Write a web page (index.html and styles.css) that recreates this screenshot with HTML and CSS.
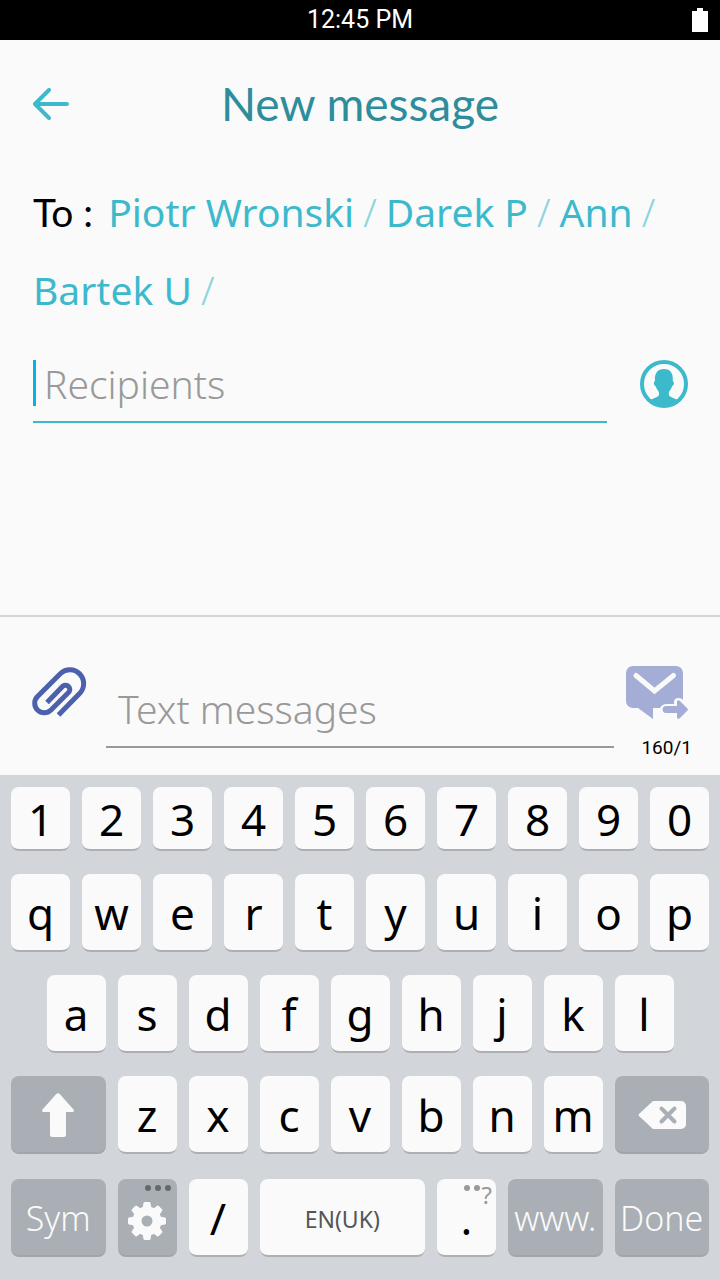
FILE: index.html
```html
<!DOCTYPE html>
<html lang="en">
<head>
<meta charset="utf-8">
<meta name="viewport" content="width=device-width, initial-scale=1">
<title>New message</title>
<link rel="stylesheet" href="styles.css">
</head>
<body>
<div class="screen">
  <div class="status-bar">
    <span class="status-time">12:45 PM</span>
    <svg class="battery" viewBox="0 0 16 24" aria-hidden="true"><path d="M0 3h5V0h6v3h5v21H0z"/></svg>
  </div>

  <header class="header">
    <button class="icon-button back" type="button" aria-label="Back">
      <svg width="36" height="32" viewBox="0 0 36 32" aria-hidden="true"><path d="M16 2L2 16l14 14M2 16h32"/></svg>
    </button>
    <h1 class="title">New message</h1>
  </header>

  <main class="recipients">
    <div class="chips">
      <span class="to-label">To :</span>
      <span class="chip"><button class="name" type="button">Piotr Wronski</button><span class="slash">/</span></span>
      <span class="chip"><button class="name" type="button">Darek P</button><span class="slash">/</span></span>
      <span class="chip"><button class="name" type="button">Ann</button><span class="slash">/</span></span>
      <span class="chip"><button class="name" type="button">Bartek U</button><span class="slash">/</span></span>
    </div>
    <div class="recipient-row">
      <div class="field field-active">
        <span class="caret"></span>
        <input class="input" type="text" placeholder="Recipients" aria-label="Recipients">
      </div>
      <button class="icon-button contact" type="button" aria-label="Choose contact">
        <svg width="48" height="48" viewBox="0 0 48 48" aria-hidden="true">
          <circle cx="24" cy="24" r="22" fill="none" stroke="currentColor" stroke-width="4"/>
          <path fill="currentColor" d="M10 40.500c2-1.700 6-2.900 8.500-4.500.7-1.300.5-2.900.3-4.300-1.500-1.600-2.500-3.600-3.300-5.600-1.600-.5-2.300-4.600-.5-5.200C14.200 13.500 17.500 9 24 9s9.500 4.500 8.700 11.900c2 .6 1.200 4.700-.4 5.200-.8 2-1.800 4-3.300 5.600-.2 1.400-.3 3 .4 4.300 2.500 1.600 6.500 2.800 8.500 4.500C34 45 29 47 24 47s-10-2-14-6.500z"/>
        </svg>
      </button>
    </div>
  </main>

  <section class="compose">
    <button class="icon-button attach" type="button" aria-label="Attach">
      <svg width="56" height="52" viewBox="0 -1 56 52" aria-hidden="true"><path d="M15 35.500L31 19a4.300 4.300 0 0 1 6 6L19 43A9.500 9.500 0 0 1 5.500 29.500L28.500 6.500a13.800 13.800 0 0 1 19.500 19.500L26.500 48"/></svg>
    </button>
    <div class="field field-text">
      <input class="input" type="text" placeholder="Text messages" aria-label="Text messages">
    </div>
    <div class="send-box">
      <button class="icon-button send" type="button" aria-label="Send">
        <svg width="64" height="54" viewBox="0 0 64 54" aria-hidden="true">
          <path fill="#a4add6" d="M7 0h43a7 7 0 0 1 7 7v27c-1.500-2.500-9-3.500-9 2v2h-7c-4 0-6 2-7 4h-7v11L12 42H7a7 7 0 0 1-7-7V7a7 7 0 0 1 7-7z"/>
          <path fill="none" stroke="#fafafa" stroke-width="5" stroke-linecap="round" d="M10 9.500L28.500 25 47.500 9.500"/>
          <path fill="#a4add6" d="M40 40h11v-4c0-2 1.500-2.500 3-1l7.500 7.500q1 1 0 2L54 52c-1.500 1.500-3 1-3-1v-4H40c-4.500 0-4.500-7 0-7z"/>
        </svg>
      </button>
      <span class="counter">160/1</span>
    </div>
  </section>

  <section class="keyboard" aria-label="Keyboard">
    <div class="keys keys-number">
      <button class="key" type="button">1</button><button class="key" type="button">2</button><button class="key" type="button">3</button><button class="key" type="button">4</button><button class="key" type="button">5</button><button class="key" type="button">6</button><button class="key" type="button">7</button><button class="key" type="button">8</button><button class="key" type="button">9</button><button class="key" type="button">0</button>
    </div>
    <div class="keys">
      <button class="key" type="button">q</button><button class="key" type="button">w</button><button class="key" type="button">e</button><button class="key" type="button">r</button><button class="key" type="button">t</button><button class="key" type="button">y</button><button class="key" type="button">u</button><button class="key" type="button">i</button><button class="key" type="button">o</button><button class="key" type="button">p</button>
    </div>
    <div class="keys keys-inset">
      <button class="key" type="button">a</button><button class="key" type="button">s</button><button class="key" type="button">d</button><button class="key" type="button">f</button><button class="key" type="button">g</button><button class="key" type="button">h</button><button class="key" type="button">j</button><button class="key" type="button">k</button><button class="key" type="button">l</button>
    </div>
    <div class="keys">
      <button class="key key-wide key-dark" type="button" aria-label="Shift">
        <svg width="34" height="44" viewBox="0 0 34 44" aria-hidden="true"><path fill="#fafafa" d="M15.500.8q1.500-1.300 3 0l13.800 15.400c1.200 1.400.6 2.800-1.100 2.800H25v23q0 2-2 2H11q-2 0-2-2V19H2.800C1.100 19 .5 17.600 1.700 16.200z"/></svg>
      </button>
      <button class="key" type="button">z</button><button class="key" type="button">x</button><button class="key" type="button">c</button><button class="key" type="button">v</button><button class="key" type="button">b</button><button class="key" type="button">n</button><button class="key" type="button">m</button>
      <button class="key key-wide key-dark" type="button" aria-label="Delete">
        <svg width="48" height="28" viewBox="0 0 48 28" aria-hidden="true"><path fill="#fafafa" d="M15 0h28a5 5 0 0 1 5 5v18a5 5 0 0 1-5 5H15L1 15q-1-1 0-2z"/><path fill="none" stroke="#a9afb4" stroke-width="4" stroke-linecap="round" d="M23.500 7.500l13 13m0-13l-13 13"/></svg>
      </button>
    </div>
    <div class="keys keys-last">
      <button class="key key-wide key-dark key-word" type="button">Sym</button>
      <button class="key key-dark key-gear" type="button" aria-label="Settings">
        <svg class="more" width="26" height="6" viewBox="0 0 26 6" aria-hidden="true"><g fill="#65696c"><circle cx="3" cy="3" r="3"/><circle cx="13" cy="3" r="3"/><circle cx="23" cy="3" r="3"/></g></svg>
        <svg width="38" height="38" viewBox="0 0 38 38" aria-hidden="true"><g fill="#fafafa"><g id="teeth"><path id="tooth" d="M14 9l1.500-8q.2-1 1.200-1h4.600q1 0 1.200 1L24 9z"/><use href="#tooth" transform="rotate(45 19 19)"/><use href="#tooth" transform="rotate(90 19 19)"/><use href="#tooth" transform="rotate(135 19 19)"/></g><use href="#teeth" transform="rotate(180 19 19)"/></g><circle cx="19" cy="19" r="10" fill="none" stroke="#fafafa" stroke-width="9"/></svg>
      </button>
      <button class="key" type="button">/</button>
      <button class="key key-space key-lang" type="button">EN(UK)</button>
      <button class="key key-dot" type="button">.<span class="more more-text"><svg width="16" height="6" viewBox="0 0 16 6" aria-hidden="true"><g fill="#999"><circle cx="3" cy="3" r="3"/><circle cx="13" cy="3" r="3"/></g></svg>?</span></button>
      <button class="key key-wide key-dark key-word" type="button">www.</button>
      <button class="key key-wide key-dark key-word" type="button">Done</button>
    </div>
  </section>
</div>
</body>
</html>
```
FILE: styles.css
```css
* { box-sizing: border-box; }

body {
  margin: 0;
  background: #fafafa;
  color: #000;
  font-family: "Noto Sans", "Open Sans", sans-serif;
}

button, input {
  margin: 0;
  padding: 0;
  border: 0;
  background: none;
  color: inherit;
  font: inherit;
}

svg { display: block; }

.screen {
  display: flex;
  flex-direction: column;
  min-height: 100vh;
}

.status-bar {
  display: grid;
  grid-template-columns: 1fr auto 1fr;
  align-items: center;
  height: 40px;
  padding: 0 20px;
  background: #000;
  color: #fff;
}

.status-time {
  grid-column: 2;
  font: 400 25px/40px Roboto, sans-serif;
}

.battery {
  justify-self: end;
  width: 16px;
  height: 24px;
  margin-right: -8px;
  fill: #fff;
}

.header {
  display: grid;
  grid-template-columns: 36px 1fr 36px;
  align-items: center;
  height: 128px;
  padding: 0 33px;
}

.back path {
  fill: none;
  stroke: #3db9cc;
  stroke-width: 4;
  stroke-linecap: round;
  stroke-linejoin: round;
}

.title {
  margin: 0;
  color: #2d8d9b;
  font: 400 46px/64px Lato, sans-serif;
  text-align: center;
}

.recipients { padding: 5px 32px 0 33px; }

.chips {
  display: flex;
  flex-wrap: wrap;
  column-gap: 9px;
  font-size: 39px;
  line-height: 78px;
}

.to-label {
  margin-right: 6px;
  font-family: Lato, sans-serif;
}

.chip {
  display: flex;
  gap: 9px;
}

.name { color: #3db9cc; }

.slash {
  color: #8bd5e0;
  font-weight: 300;
}

.recipient-row {
  display: flex;
  align-items: center;
  gap: 33px;
  padding-top: 16px;
}

.field {
  display: flex;
  flex: 1;
  align-items: center;
  min-width: 0;
}

.field-active {
  height: 78px;
  border-bottom: 2px solid #3db9cc;
}

.caret {
  width: 3px;
  height: 46px;
  background: #00b4e6;
}

.input {
  flex: 1;
  width: 100%;
  min-width: 0;
  height: 60px;
  padding-left: 8px;
  outline: 0;
  font-size: 39px;
  font-weight: 300;
}

.input::placeholder { color: #999; opacity: 1; }

.icon-button { flex: none; }

.contact { color: #3db9cc; }

.compose {
  display: flex;
  align-items: flex-start;
  height: 160px;
  margin-top: auto;
  padding: 49px 28px 0 32px;
  border-top: 2px solid #d2d5da;
}

.attach path {
  fill: none;
  stroke: #4b61ae;
  stroke-width: 5;
}

.field-text {
  height: 82px;
  margin: 0 12px 0 18px;
  padding: 5px 0 0 4px;
  border-bottom: 2px solid #999;
}

.send-box {
  display: flex;
  flex-direction: column;
  align-items: flex-start;
  gap: 16px;
  width: 66px;
}

.counter {
  align-self: flex-end;
  font: 400 19px/24px Roboto, sans-serif;
}

.keyboard {
  display: flex;
  flex-direction: column;
  gap: 23px;
  padding: 12px 11px 23px;
  background: #d2d5da;
}

.keys {
  display: grid;
  grid-template-columns: repeat(20, 1fr);
  grid-auto-rows: 78px;
  gap: 12px;
}

.keys-number { grid-auto-rows: 64px; }

.keys-last { margin-top: 2px; }

.keys-inset .key:first-child { grid-column: 2 / span 2; }

.key {
  position: relative;
  display: flex;
  grid-column: span 2;
  align-items: center;
  justify-content: center;
  min-width: 0;
  padding-top: 2px;
  border-bottom: 2px solid #adafb4;
  border-radius: 8px;
  background: #fafafa;
  font-size: 44px;
  line-height: 60px;
}

.key-wide { grid-column: span 3; }

.key-space { grid-column: span 5; }

.key-dark {
  border-bottom-color: #a1a6aa;
  background: #a9afb4;
  color: #fafafa;
}

.key-word {
  font-size: 34px;
  font-weight: 300;
}

.key-lang {
  padding-top: 4px;
  color: #555;
  font-size: 23px;
}

.key-gear { padding-top: 8px; }

.more {
  position: absolute;
  top: 6px;
  right: 6px;
}

.more-text {
  display: flex;
  right: 4px;
  gap: 2px;
  color: #999;
  font-size: 24px;
  line-height: 20px;
}
```
